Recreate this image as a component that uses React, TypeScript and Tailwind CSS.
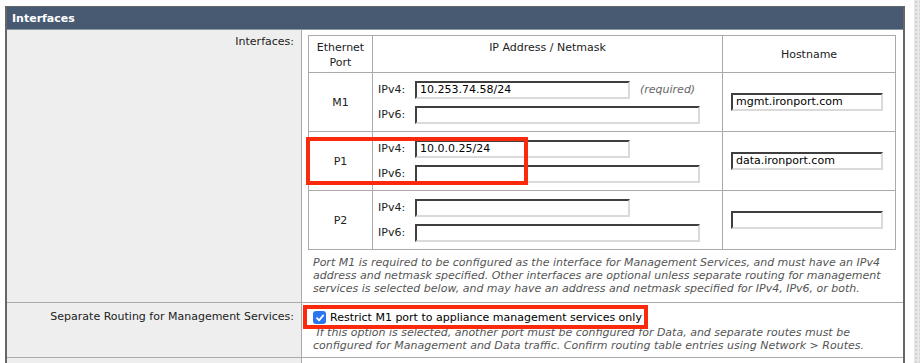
import React from "react";

const FONT = { fontFamily: '"DejaVu Sans", Verdana, sans-serif' };

function Field({ className, value }: { className: string; value?: string }) {
  return (
    <div
      className={`h-[18px] box-border border-2 border-t-[#3f3f3f] border-l-[#3f3f3f] border-b-[#dadada] border-r-[#dadada] bg-white pl-[3px] text-[11px] leading-[14px] text-black whitespace-nowrap overflow-hidden ${className}`}
    >
      {value}
    </div>
  );
}

function IpRow({ label, w, value, extra }: { label: string; w: string; value?: string; extra?: React.ReactNode }) {
  return (
    <div className="flex items-center h-[18px]">
      <span className="w-[37px] text-[11px] text-[#222]">{label}</span>
      <Field className={w} value={value} />
      {extra}
    </div>
  );
}

function PortRow({
  port,
  v4w,
  v4,
  host,
  required,
}: {
  port: string;
  v4w: string;
  v4?: string;
  host?: string;
  required?: boolean;
}) {
  return (
    <tr className="h-[59px]">
      <td className="border border-[#aaa] text-center align-middle text-[11px] text-[#222]">{port}</td>
      <td className="border border-[#aaa] align-middle pl-[5px]">
        <div className="flex flex-col gap-[7px]">
          <IpRow
            label="IPv4:"
            w={v4w}
            value={v4}
            extra={
              required ? (
                <span className="ml-[10px] italic text-[11px] text-[#666]">(required)</span>
              ) : null
            }
          />
          <IpRow label="IPv6:" w="w-[285px]" />
        </div>
      </td>
      <td className="border border-[#aaa] align-middle pl-[8px]">
        <Field className="w-[152px]" value={host} />
      </td>
    </tr>
  );
}

function Check() {
  return (
    <span className="inline-flex w-[13px] h-[13px] rounded-[3px] bg-[#2a76f0] items-center justify-center mr-[4px] shrink-0">
      <svg width="10" height="10" viewBox="0 0 10 10">
        <path d="M2 5.2 L4.1 7.4 L8.2 2.4" fill="none" stroke="#fff" strokeWidth="1.8" strokeLinecap="round" strokeLinejoin="round" />
      </svg>
    </span>
  );
}

export default function App() {
  return (
    <div className="w-[920px] h-[363px] overflow-hidden bg-white flex text-[11px] leading-[13px] text-[#111]" style={FONT}>
      <div className="ml-[5px] mt-[6px] w-[900px] shrink-0 border-t border-l-2 border-r-2 border-[#666] relative">
        <div className="h-[23px] bg-[#475a72] border-b border-[#8a96a6] flex items-center pl-[5px] text-white font-bold text-[11px]">
          Interfaces
        </div>

        {/* Row 1 */}
        <div className="flex border-b border-[#aaa]">
          <div className="w-[295px] shrink-0 bg-[#eeeeee] border-r border-[#aaa] text-right pr-[7px] pt-[5px] text-[#222]">
            Interfaces:
          </div>
          <div className="flex-1 bg-white pl-[6px] pt-[5px] pb-[7px]">
            <table className="border-collapse table-fixed w-[587px]">
              <colgroup>
                <col className="w-[64px]" />
                <col className="w-[350px]" />
                <col className="w-[173px]" />
              </colgroup>
              <tbody>
                <tr className="h-[37px]">
                  <td className="border border-[#aaa] text-center align-top pt-[4px] leading-[15px] text-[#222]">
                    Ethernet
                    <br />
                    Port
                  </td>
                  <td className="border border-[#aaa] text-center align-top pt-[4px] leading-[15px] text-[#222]">
                    IP Address / Netmask
                  </td>
                  <td className="border border-[#aaa] text-center align-middle text-[#222]">Hostname</td>
                </tr>
                <PortRow port="M1" v4w="w-[215px]" v4="10.253.74.58/24" host="mgmt.ironport.com" required />
                <PortRow port="P1" v4w="w-[215px]" v4="10.0.0.25/24" host="data.ironport.com" />
                <PortRow port="P2" v4w="w-[215px]" />
              </tbody>
            </table>
            <p className="italic text-[#555] pl-[5px] mt-[6px] leading-[13px] whitespace-nowrap">
              Port M1 is required to be configured as the interface for Management Services, and must have an IPv4
              <br />
              address and netmask specified. Other interfaces are optional unless separate routing for management
              <br />
              services is selected below, and may have an address and netmask specified for IPv4, IPv6, or both.
            </p>
          </div>
        </div>

        {/* Row 2 */}
        <div className="flex border-b border-[#aaa]">
          <div className="w-[295px] shrink-0 bg-[#eeeeee] border-r border-[#aaa] text-right pr-[7px] pt-[7px] text-[#222]">
            Separate Routing for Management Services:
          </div>
          <div className="flex-1 bg-white pl-[11px] pt-[8px] pb-[5px] relative">
            <div className="flex items-center h-[13px] text-black">
              <Check />
              <span>Restrict M1 port to appliance management services only</span>
            </div>
            <p className="italic text-[#555] mt-[2px] whitespace-nowrap">
              &nbsp;If this option is selected, another port must be configured for Data, and separate routes must be
              <br />
              configured for Management and Data traffic. Confirm routing table entries using Network &gt; Routes.
            </p>
            <div className="absolute left-[1px] top-[2px] w-[345px] h-[24px] border-[4px] border-[#fb2a0c]" />
          </div>
        </div>

        {/* Row 3 */}
        <div className="flex h-[20px]">
          <div className="w-[295px] shrink-0 bg-[#eeeeee] border-r border-[#aaa]" />
          <div className="flex-1 bg-white" />
        </div>

        {/* Red highlight around P1 */}
        <div className="absolute left-[299px] top-[130px] w-[222px] h-[48px] border-[4px] border-[#fb2a0c]" />
      </div>

      <div className="w-[9px] shrink-0 bg-white" />
      <div className="flex-1 bg-[#e6e6e6] bg-[radial-gradient(#d2d2d2_1px,transparent_1px)] bg-[length:4px_4px]" />
    </div>
  );
}
